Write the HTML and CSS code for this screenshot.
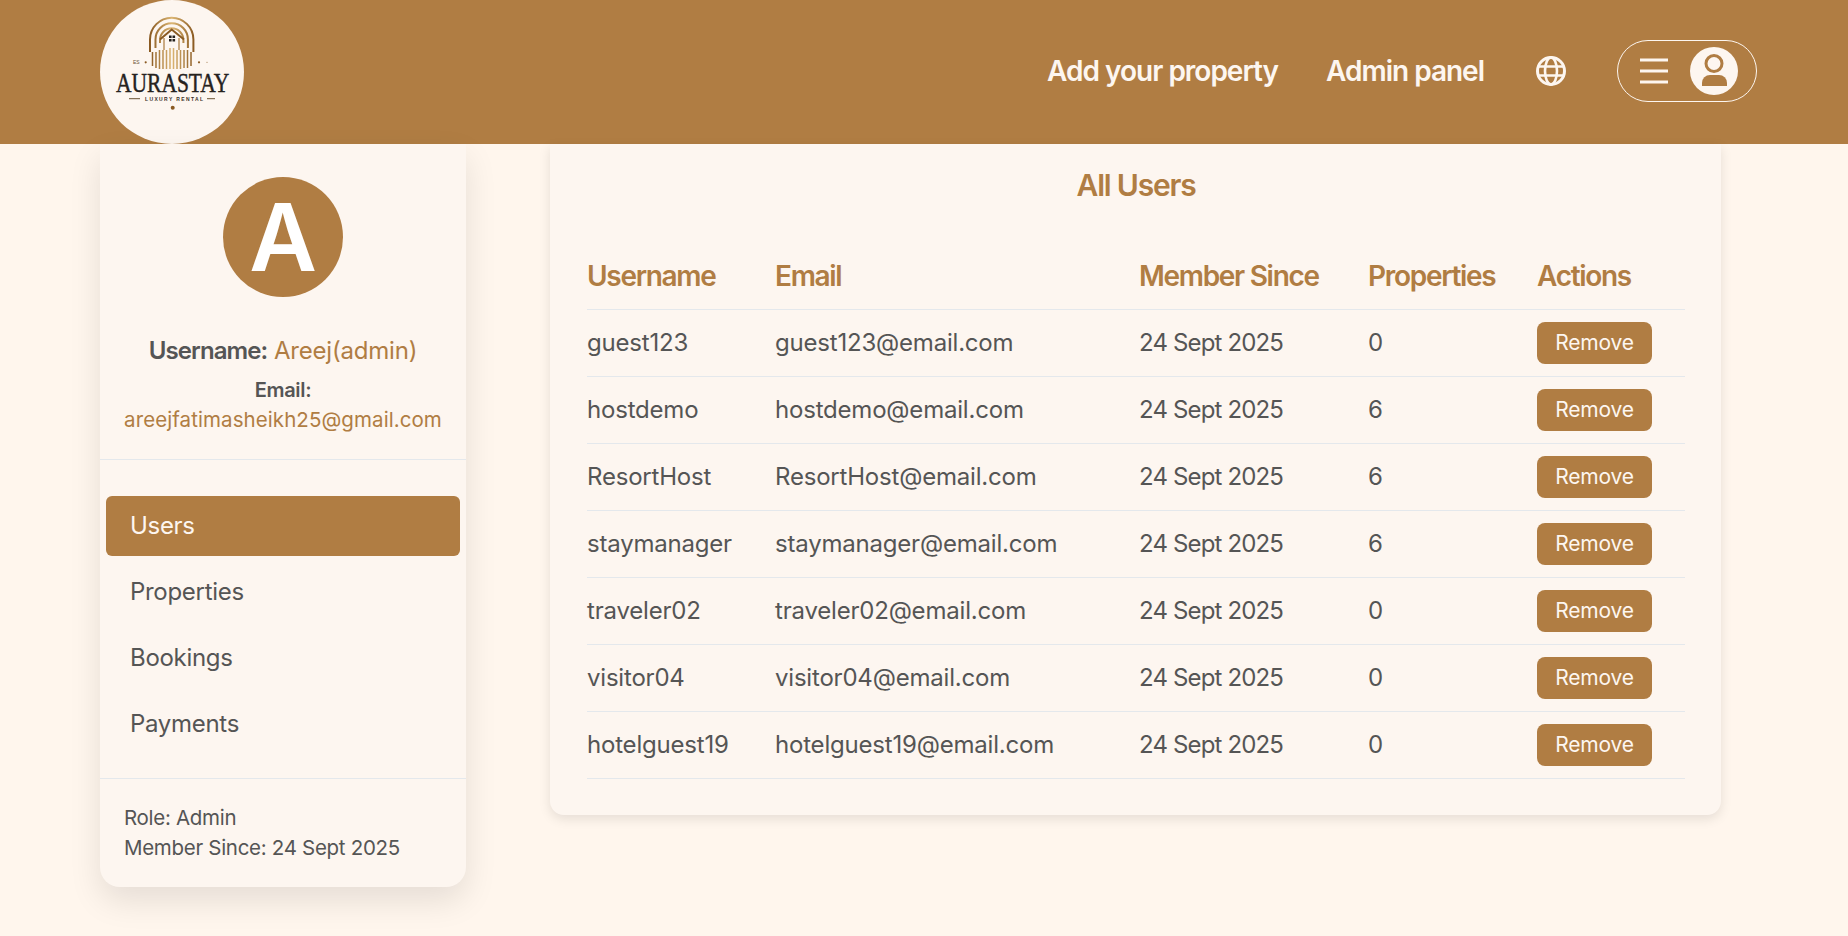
FILE: index.html
```html
<!DOCTYPE html>
<html lang="en">
<head>
<meta charset="utf-8">
<title>Aurastay Admin</title>
<link rel="stylesheet" href="styles.css">
</head>
<body>
<header class="topbar">
  <div class="logo">
    <svg viewBox="0 0 144 144" width="144" height="144">
      <defs>
        <linearGradient id="gold" gradientUnits="userSpaceOnUse" x1="50" y1="0" x2="94" y2="0">
          <stop offset="0" stop-color="#8a5a22"/>
          <stop offset="0.5" stop-color="#dcb673"/>
          <stop offset="1" stop-color="#8a5a22"/>
        </linearGradient>
      </defs>
      <g fill="none" stroke="url(#gold)" stroke-width="2">
        <path d="M50 52V39.500a21.700 21.700 0 0 1 43.400 0V52"/>
        <path d="M55.500 48V39.500a16.200 16.200 0 0 1 32.400 0V48"/>
        <path d="M60 43V40a11.700 11.700 0 0 1 23.400 0V43"/>
        <path d="M52.500 52V66M56 52V68M59.500 50V69M63 50V69M66.500 50V69M70 46V69M73.500 46V69M77 50V69M80.500 50V69M84 50V68M87.500 50V68M91 52V66" stroke-width="1.500"/>
      </g>
      <path d="M60 39.500L71.700 29.500L84 39.500" fill="none" stroke="#8a5a22" stroke-width="2"/>
      <rect x="64" y="37" width="15" height="11" fill="#fdf6f0"/>
      <path d="M64 38V50M79 38V50" stroke="#a9793c" stroke-width="1.200"/>
      <path d="M69 35.500h2.600v2.600h-2.600zM72.500 35.500h2.600v2.600h-2.600zM69 39h2.600v2.600h-2.600zM72.500 39h2.600v2.600h-2.600z" fill="#26221e"/>
      <text x="33" y="64" class="logo-es">ES</text>
      <circle cx="45.700" cy="62.300" r="1.100" fill="#8a5a22"/>
      <circle cx="99" cy="62.300" r="1.100" fill="#8a5a22"/>
      <circle cx="107" cy="62.300" r="0.500" fill="#8a5a22"/>
      <text transform="translate(16 91.500) scale(1 1.250)" class="logo-name">AURASTAY</text>
      <text x="45" y="100.500" textLength="58" class="logo-sub">LUXURY RENTAL</text>
      <path d="M29 98.700H40M107 98.700H115" stroke="#6b5334" stroke-width="1"/>
      <circle cx="72.700" cy="107.700" r="2" fill="#8a5a22"/>
    </svg>
  </div>
  <nav class="topnav">
    <a class="toplink">Add your property</a>
    <a class="toplink">Admin panel</a>
    <svg class="globe" viewBox="0 0 32 32" width="32" height="32" fill="none" stroke="#fdf6f0" stroke-width="3">
      <circle cx="16" cy="16" r="13.500"/>
      <ellipse cx="16" cy="16" rx="6" ry="13.500" stroke-width="2.600"/>
      <path d="M3 11.500H29M3 20.500H29" stroke-width="2.600"/>
    </svg>
    <div class="usermenu">
      <svg viewBox="0 0 28 26" width="28" height="26" stroke="#fdf6f0" stroke-width="3">
        <path d="M0 2H28M0 13H28M0 24H28"/>
      </svg>
      <svg viewBox="0 0 48 48" width="48" height="48">
        <circle cx="24" cy="24" r="24" fill="#fdf6f0"/>
        <circle cx="24" cy="16.500" r="8" fill="#fdf6f0" stroke="#b07d43" stroke-width="3"/>
        <path d="M12 39V36a8 8 0 0 1 8-8H29a8 8 0 0 1 8 8V39Z" fill="#b07d43"/>
      </svg>
    </div>
  </nav>
</header>

<main class="layout">
  <aside class="sidebar">
    <section class="profile">
      <div class="avatar">A</div>
      <p class="uname"><strong>Username:</strong> <span class="accent">Areej(admin)</span></p>
      <p class="umail"><strong>Email:</strong><br><span class="accent">areejfatimasheikh25@gmail.com</span></p>
    </section>
    <ul class="sidenav">
      <li class="sideitem active">Users</li>
      <li class="sideitem">Properties</li>
      <li class="sideitem">Bookings</li>
      <li class="sideitem">Payments</li>
    </ul>
    <footer class="sidefoot">
      <div>Role: Admin</div>
      <div>Member Since: 24 Sept 2025</div>
    </footer>
  </aside>

  <section class="panel">
    <h2 class="title">All Users</h2>
    <table class="users">
      <thead>
        <tr><th class="c1">Username</th><th class="c2">Email</th><th class="c3">Member Since</th><th class="c4">Properties</th><th>Actions</th></tr>
      </thead>
      <tbody>
        <tr><td>guest123</td><td>guest123@email.com</td><td class="date">24 Sept 2025</td><td>0</td><td><button class="remove">Remove</button></td></tr>
        <tr><td>hostdemo</td><td>hostdemo@email.com</td><td class="date">24 Sept 2025</td><td>6</td><td><button class="remove">Remove</button></td></tr>
        <tr><td>ResortHost</td><td>ResortHost@email.com</td><td class="date">24 Sept 2025</td><td>6</td><td><button class="remove">Remove</button></td></tr>
        <tr><td>staymanager</td><td>staymanager@email.com</td><td class="date">24 Sept 2025</td><td>6</td><td><button class="remove">Remove</button></td></tr>
        <tr><td>traveler02</td><td>traveler02@email.com</td><td class="date">24 Sept 2025</td><td>0</td><td><button class="remove">Remove</button></td></tr>
        <tr><td>visitor04</td><td>visitor04@email.com</td><td class="date">24 Sept 2025</td><td>0</td><td><button class="remove">Remove</button></td></tr>
        <tr><td>hotelguest19</td><td>hotelguest19@email.com</td><td class="date">24 Sept 2025</td><td>0</td><td><button class="remove">Remove</button></td></tr>
      </tbody>
    </table>
  </section>
</main>
</body>
</html>
```

FILE: styles.css
```css
* { box-sizing: border-box; }
html, body { margin: 0; height: 100%; }
body {
  background: #fff6ed;
  color: #555;
  font-family: Inter, "Noto Sans", sans-serif;
  overflow: hidden;
}
.topbar {
  height: 144px;
  background: #b07d43;
  display: flex;
  align-items: center;
  justify-content: space-between;
  padding: 0 91px 0 100px;
}
.logo {
  width: 144px;
  height: 144px;
  border-radius: 50%;
  background: #fdf6f0;
}
.logo svg { display: block; }
.logo-es { font: 5px "Liberation Sans", sans-serif; fill: #6b5334; }
.logo-name { font: 400 21.500px "Liberation Serif", serif; fill: #26221e; stroke: #26221e; stroke-width: 0.35px; }
.logo-sub { font: 700 5px "Liberation Sans", sans-serif; fill: #3a3028; }
.topnav { display: flex; align-items: center; }
.toplink {
  color: #fdf6f0;
  font-size: 28px;
  font-weight: 600;
  letter-spacing: -1px;
  margin: 0 48px 2px 0;
}
.globe { margin: 0 50px 2px 3px; }
.usermenu {
  width: 140px;
  height: 62px;
  margin-bottom: 2px;
  border: 1px solid #fdf6f0;
  border-radius: 31px;
  display: flex;
  align-items: center;
  padding-left: 22px;
  gap: 22px;
}
.layout {
  display: flex;
  align-items: flex-start;
  padding: 0 127px 0 100px;
  gap: 84px;
}
.sidebar {
  width: 366px;
  height: 743px;
  flex: none;
  background: #fdf6f0;
  border-radius: 0 0 20px 20px;
  box-shadow: 0 14px 32px rgba(0, 0, 0, 0.1);
  display: flex;
  flex-direction: column;
}
.profile {
  height: 316px;
  padding-top: 33px;
  border-bottom: 1px solid #e4e8ec;
  text-align: center;
}
.avatar {
  width: 120px;
  height: 120px;
  margin: 0 auto;
  border-radius: 50%;
  background: #b07d43;
  color: #fff;
  font-size: 93px;
  font-weight: 600;
  line-height: 120px;
}
.uname { margin: 38px 0 0; font-size: 24px; line-height: 32px; letter-spacing: -0.2px; }
.umail { margin: 8px 0 0; font-size: 20px; line-height: 30px; }
.uname strong { font-weight: 600; letter-spacing: -0.9px; }
.umail strong { font-weight: 600; letter-spacing: -0.3px; }
.umail .accent { font-size: 20.500px; letter-spacing: 0.08px; }
.accent { color: #b07d43; }
.sidenav {
  list-style: none;
  margin: 0;
  padding: 36px 6px 0;
  height: 318px;
  display: flex;
  flex-direction: column;
  gap: 6px;
}
.sideitem {
  height: 60px;
  padding-left: 24px;
  font-size: 24px;
  line-height: 60px;
  letter-spacing: -0.3px;
  border-radius: 6px;
}
.sideitem.active { background: #b07d43; color: #fdf6f0; }
.sidefoot {
  border-top: 1px solid #e4e8ec;
  padding: 24px 24px 0;
  font-size: 20.500px;
  line-height: 30px;
  letter-spacing: -0.3px;
}
.panel {
  flex: 1;
  height: 671px;
  background: #fdf6f0;
  border-radius: 0 0 14px 14px;
  box-shadow: 0 4px 12px rgba(0, 0, 0, 0.1);
  padding: 18px 36px 0 37px;
}
.title {
  margin: 0;
  text-align: center;
  color: #b07d43;
  font-size: 30px;
  line-height: 46px;
  font-weight: 600;
  letter-spacing: -1.2px;
}
.users {
  width: 1098px;
  margin-top: 37px;
  border-collapse: collapse;
  table-layout: fixed;
}
.users th {
  height: 64px;
  text-align: left;
  padding: 0 0 1px;
  color: #b07d43;
  font-size: 28px;
  font-weight: 600;
  letter-spacing: -1.300px;
  border-bottom: 1px solid #e4e8ec;
}
.users td {
  height: 67px;
  padding: 0;
  font-size: 24px;
  letter-spacing: -0.2px;
  border-bottom: 1px solid #e4e8ec;
}
.users td.date { letter-spacing: -0.85px; }
.c1 { width: 188px; }
.c2 { width: 364px; }
.c3 { width: 229px; }
.c4 { width: 169px; }
.remove {
  display: block;
  width: 115px;
  height: 42px;
  padding: 0;
  border: 0;
  border-radius: 8px;
  background: #b07d43;
  color: #fdf6f0;
  font: 400 21px Inter, "Noto Sans", sans-serif;
  letter-spacing: -0.2px;
}
```
